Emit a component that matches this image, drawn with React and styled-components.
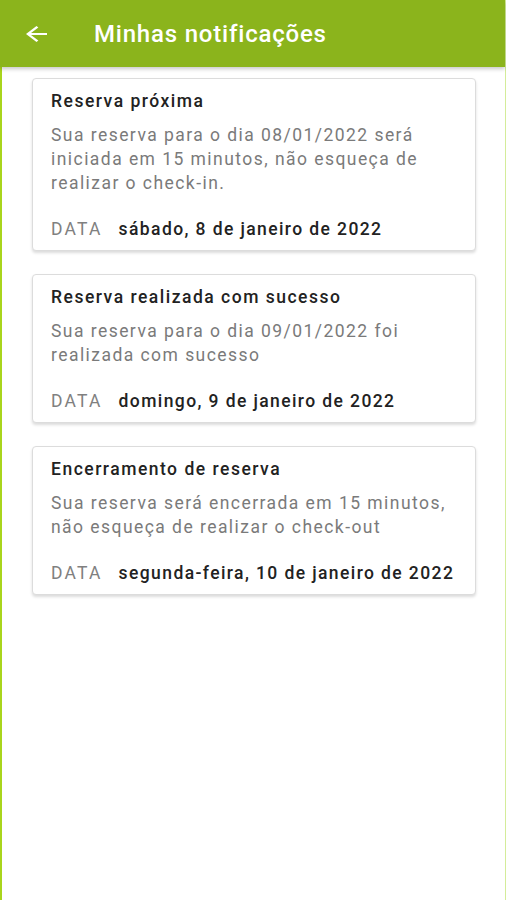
import React from "react";
import styled, { createGlobalStyle } from "styled-components";

const Global = createGlobalStyle`
  html, body { margin: 0; padding: 0; background: #ffffff; }
  body { font-family: Roboto, "Noto Sans", "Liberation Sans", sans-serif; }
  #root { min-height: 100vh; }
`;

const Screen = styled.div`
  min-height: 900px;
  box-sizing: border-box;
  background: #ffffff;
  border-left: 2px solid #a9d51c;
  border-right: 1px solid #d4ec9a;
  display: flex;
  flex-direction: column;
`;

const AppBar = styled.header`
  height: 67px;
  background: #8bb41c;
  display: flex;
  align-items: center;
  margin-left: -2px;
  padding-left: 26px;
  box-shadow: 0 2px 4px rgba(0, 0, 0, 0.22);
  position: relative;
  z-index: 1;
`;

const BackButton = styled.button`
  width: 21px;
  height: 16px;
  padding: 0;
  border: none;
  background: transparent;
  display: flex;
  align-items: center;
  justify-content: center;
  margin-top: 1px;
`;

const Title = styled.h1`
  margin: 0 0 0 47px;
  font-size: 24px;
  font-weight: 500;
  color: #ffffff;
  letter-spacing: 0.8px;
`;

const List = styled.main`
  display: flex;
  flex-direction: column;
  gap: 23px;
  padding: 11px 29px 0 30px;
`;

const Card = styled.article`
  border: 1px solid #dcdcdc;
  border-radius: 4px;
  background: #ffffff;
  box-shadow: 0 2px 3px rgba(0, 0, 0, 0.14);
  padding: 10px 8px 9px 18px;
  display: flex;
  flex-direction: column;
`;

const CardTitle = styled.h2`
  margin: 0;
  font-size: 17.5px;
  line-height: 24px;
  font-weight: 500;
  color: #222222;
  letter-spacing: 1.5px;
`;

const Message = styled.p`
  margin: 10px 0 0 0;
  font-size: 17.5px;
  line-height: 24px;
  font-weight: 400;
  color: #7a7a7a;
  letter-spacing: 1.45px;
`;

const DateRow = styled.div`
  margin-top: 22px;
  display: flex;
  align-items: baseline;
  gap: 16px;
  font-size: 17.5px;
  line-height: 24px;
`;

const DateLabel = styled.span`
  color: #808080;
  font-weight: 400;
  letter-spacing: 2.2px;
`;

const DateValue = styled.span`
  color: #222222;
  font-weight: 500;
  letter-spacing: 1.4px;
`;

const notifications = [
  {
    title: "Reserva próxima",
    message:
      "Sua reserva para o dia 08/01/2022 será iniciada em 15 minutos, não esqueça de realizar o check-in.",
    date: "sábado, 8 de janeiro de 2022",
  },
  {
    title: "Reserva realizada com sucesso",
    message: "Sua reserva para o dia 09/01/2022 foi realizada com sucesso",
    date: "domingo, 9 de janeiro de 2022",
  },
  {
    title: "Encerramento de reserva",
    message:
      "Sua reserva será encerrada em 15 minutos, não esqueça de realizar o check-out",
    date: "segunda-feira, 10 de janeiro de 2022",
  },
];

function ArrowBack() {
  return (
    <svg width="21" height="16" viewBox="4 4 16 16" preserveAspectRatio="none">
      <path
        d="M20 11H7.83l5.59-5.59L12 4l-8 8 8 8 1.41-1.41L7.83 13H20v-2z"
        fill="#ffffff"
      />
    </svg>
  );
}

export default function App() {
  return (
    <>
      <Global />
      <Screen>
        <AppBar>
          <BackButton aria-label="Voltar">
            <ArrowBack />
          </BackButton>
          <Title>Minhas notificações</Title>
        </AppBar>
        <List>
          {notifications.map((n) => (
            <Card key={n.title}>
              <CardTitle>{n.title}</CardTitle>
              <Message>{n.message}</Message>
              <DateRow>
                <DateLabel>DATA</DateLabel>
                <DateValue>{n.date}</DateValue>
              </DateRow>
            </Card>
          ))}
        </List>
      </Screen>
    </>
  );
}
